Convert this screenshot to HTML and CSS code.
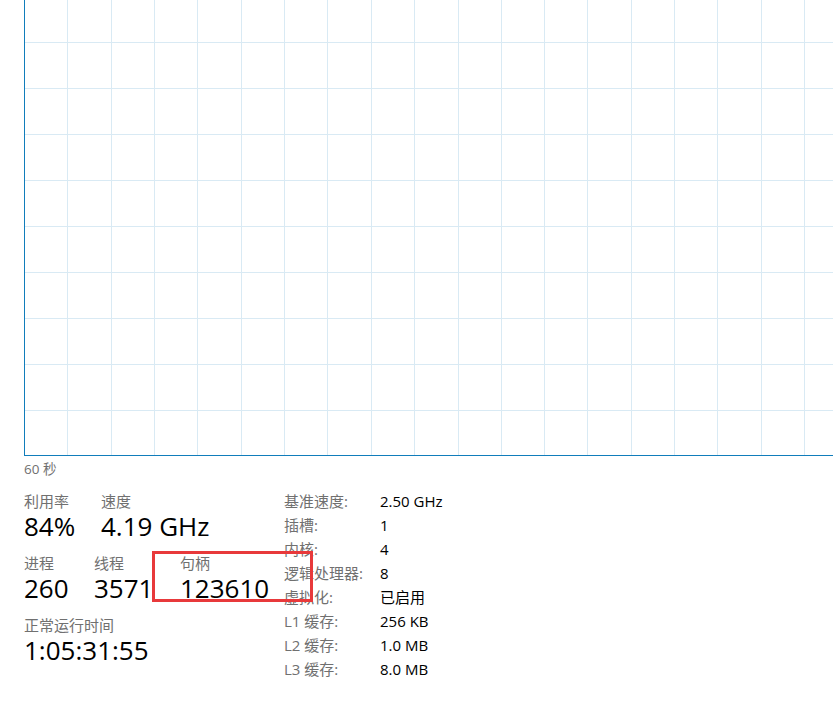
FILE: index.html
```html
<!DOCTYPE html>
<html lang="zh-CN">
<head>
<meta charset="utf-8">
<title>CPU</title>
<link rel="stylesheet" href="styles.css">
</head>
<body>
<div class="graph">
  <svg class="grid" width="808" height="455" viewBox="0 0 808 455" shape-rendering="crispEdges">
    <path d="M42.5 0V455M86.5 0V455M129.5 0V455M172.5 0V455M216.5 0V455M259.5 0V455M302.5 0V455M346.5 0V455M389.5 0V455M433.5 0V455M476.5 0V455M519.5 0V455M562.5 0V455M606.5 0V455M649.5 0V455M692.5 0V455M736.5 0V455M779.5 0V455M0 42.5H808M0 88.5H808M0 134.5H808M0 180.5H808M0 226.5H808M0 272.5H808M0 318.5H808M0 364.5H808M0 410.5H808" stroke="#d9eaf4" stroke-width="1" fill="none"/>
  </svg>
</div>
<div class="axis">60 秒</div>
<div class="stats">
  <div class="summary">
    <div class="row">
      <div class="stat stat-util"><div class="label">利用率</div><div class="value">84%</div></div>
      <div class="stat"><div class="label">速度</div><div class="value">4.19 GHz</div></div>
    </div>
    <div class="row">
      <div class="stat stat-proc"><div class="label">进程</div><div class="value">260</div></div>
      <div class="stat stat-thread"><div class="label">线程</div><div class="value">3571</div></div>
      <div class="stat"><div class="label">句柄</div><div class="value">123610</div></div>
    </div>
    <div class="row">
      <div class="stat"><div class="label">正常运行时间</div><div class="value">1:05:31:55</div></div>
    </div>
  </div>
  <dl class="specs">
    <dt>基准速度:</dt><dd>2.50 GHz</dd>
    <dt>插槽:</dt><dd>1</dd>
    <dt>内核:</dt><dd>4</dd>
    <dt>逻辑处理器:</dt><dd>8</dd>
    <dt>虚拟化:</dt><dd>已启用</dd>
    <dt>L1 缓存:</dt><dd>256 KB</dd>
    <dt>L2 缓存:</dt><dd>1.0 MB</dd>
    <dt>L3 缓存:</dt><dd>8.0 MB</dd>
  </dl>
</div>
<div class="highlight"></div>
</body>
</html>
```

FILE: styles.css
```css
html, body {
  margin: 0;
  padding: 0;
  background: #ffffff;
}

body {
  font-family: "Open Sans", "Noto Sans CJK SC", sans-serif;
  color: #000000;
  overflow: hidden;
  position: relative;
  width: 833px;
  height: 708px;
}

.graph {
  margin-left: 24px;
  height: 455px;
  border-left: 1px solid #117dbb;
  border-bottom: 1px solid #117dbb;
  overflow: hidden;
}

.grid {
  display: block;
}

.axis {
  margin-top: 3px;
  padding-left: 24px;
  font-size: 13.5px;
  line-height: 20px;
  color: #707070;
}

.stats {
  display: flex;
  margin-top: 10px;
  padding-left: 24px;
}

.summary {
  width: 260px;
  padding-top: 2px;
  display: flex;
  flex-direction: column;
  gap: 12px;
}

.row {
  display: flex;
}

.stat-util {
  width: 77px;
}

.stat-proc {
  width: 70px;
}

.stat-thread {
  width: 86px;
}

.label {
  font-size: 15px;
  line-height: 20px;
  color: #707070;
}

.value {
  font-size: 26px;
  line-height: 30px;
  color: #000000;
}

.specs {
  margin: 0;
  display: grid;
  grid-template-columns: 96px auto;
  font-size: 15px;
  line-height: 24px;
}

.specs dt {
  color: #707070;
  white-space: nowrap;
}

.specs dd {
  margin: 0;
  color: #000000;
}

.highlight {
  position: absolute;
  left: 152px;
  top: 551px;
  width: 161px;
  height: 51px;
  box-sizing: border-box;
  border: 3px solid #e8393b;
}
```
